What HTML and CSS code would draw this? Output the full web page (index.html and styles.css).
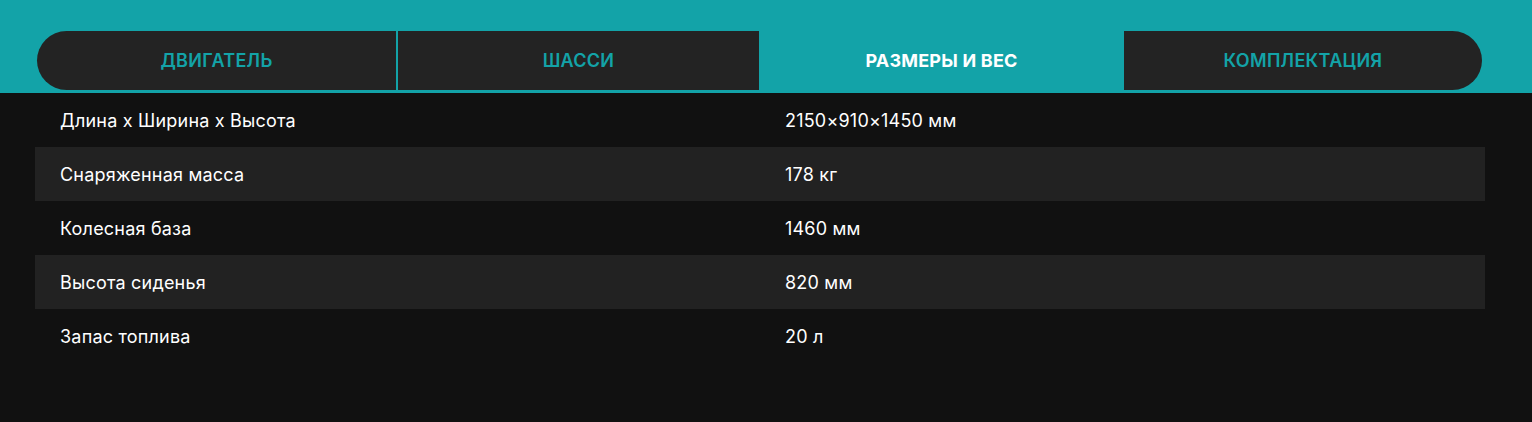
FILE: index.html
```html
<!DOCTYPE html>
<html lang="ru">
<head>
<meta charset="utf-8">
<link rel="stylesheet" href="styles.css">
</head>
<body>
<div class="page">
  <div class="tabs-band">
    <div class="tabs">
      <div class="tab tab-first">ДВИГАТЕЛЬ</div>
      <div class="tab">ШАССИ</div>
      <div class="tab tab-active">РАЗМЕРЫ И ВЕС</div>
      <div class="tab tab-last">КОМПЛЕКТАЦИЯ</div>
    </div>
  </div>
  <div class="specs">
    <div class="row"><div class="cell">Длина x Ширина x Высота</div><div class="cell">2150×910×1450 мм</div></div>
    <div class="row row-alt"><div class="cell">Снаряженная масса</div><div class="cell">178 кг</div></div>
    <div class="row"><div class="cell">Колесная база</div><div class="cell">1460 мм</div></div>
    <div class="row row-alt"><div class="cell">Высота сиденья</div><div class="cell">820 мм</div></div>
    <div class="row"><div class="cell">Запас топлива</div><div class="cell">20 л</div></div>
  </div>
</div>
</body>
</html>
```

FILE: styles.css
```css
html, body {
  margin: 0;
  padding: 0;
  background: #111111;
  font-family: Inter, "Noto Sans", sans-serif;
}
.page {
  width: 1532px;
  min-height: 422px;
  background: #111111;
}
.tabs-band {
  background: #13a3a8;
  padding: 31px 49px 3px 37px;
}
.tabs {
  display: grid;
  grid-template-columns: 361px 361px 365px 358px;
  height: 59px;
}
.tab {
  display: flex;
  align-items: center;
  justify-content: center;
  background: #232323;
  color: #13a3a8;
  font-size: 18px;
  font-weight: 600;
  letter-spacing: 0.3px;
}
.tab-first {
  border-radius: 30px 0 0 30px;
  border-right: 2px solid #13a3a8;
}
.tab-last {
  border-radius: 0 30px 30px 0;
}
.tab-active {
  background: transparent;
  color: #ffffff;
  font-weight: 700;
  letter-spacing: 0.2px;
}
.specs {
  padding: 0 47px 0 35px;
}
.row {
  display: grid;
  grid-template-columns: 725px 725px;
  height: 54px;
  align-items: center;
  color: #ffffff;
  font-size: 18px;
  letter-spacing: 0.2px;
}
.row-alt {
  background: #222222;
}
.cell {
  padding-left: 25px;
}
```
